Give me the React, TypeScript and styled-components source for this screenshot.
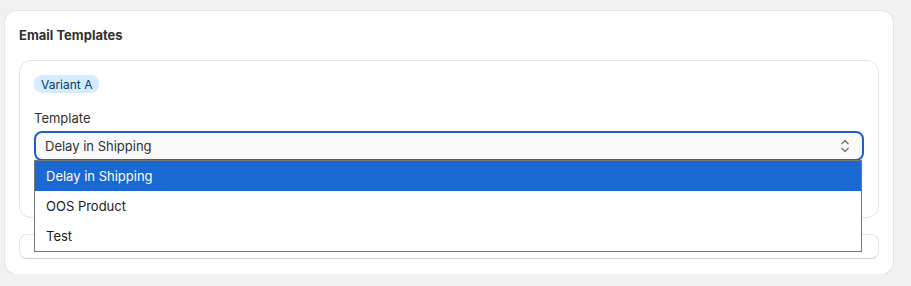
import React from "react";
import styled, { createGlobalStyle } from "styled-components";

const GlobalStyle = createGlobalStyle`
  html, body {
    margin: 0;
    padding: 0;
    background: #f1f1f1;
    font-family: Inter, "Noto Sans", sans-serif;
    color: #303030;
  }
`;

const options = ["Delay in Shipping", "OOS Product", "Test"];

export default function App() {
  const selected = options[0];

  return (
    <>
      <GlobalStyle />
      <Page>
        <Card>
          <Title>Email Templates</Title>
          <Stack>
            <InnerCard>
              <Badge>Variant A</Badge>
              <Field>
                <Label>Template</Label>
                <SelectWrap>
                  <SelectBox>
                    <SelectText>{selected}</SelectText>
                    <Chevrons viewBox="0 0 20 20" aria-hidden>
                      <path d="M6.8 7.8 10 4.6l3.2 3.2" />
                      <path d="M6.8 12.2l3.2 3.2 3.2-3.2" />
                    </Chevrons>
                  </SelectBox>
                  <Dropdown>
                    {options.map((o) => (
                      <Option key={o} $active={o === selected}>
                        {o}
                      </Option>
                    ))}
                  </Dropdown>
                </SelectWrap>
              </Field>
            </InnerCard>
            <CollapsedCard />
          </Stack>
        </Card>
      </Page>
    </>
  );
}

const Page = styled.div`
  padding: 11px 0 0 5px;
`;

const Card = styled.div`
  width: 888px;
  box-sizing: border-box;
  background: #fff;
  border-radius: 12px;
  padding: 14px 14px 15px 14px;
  box-shadow: 0 1px 0 0 #dcdcdc, 0 0 0 1px rgba(0, 0, 0, 0.05);
`;

const Title = styled.h2`
  margin: 0;
  font-size: 13px;
  line-height: 20px;
  font-weight: 650;
  color: #303030;
`;

const Stack = styled.div`
  display: flex;
  flex-direction: column;
  gap: 16px;
  margin-top: 15px;
`;

const InnerCard = styled.div`
  box-sizing: border-box;
  display: flex;
  flex-direction: column;
  align-items: flex-start;
  border: 1px solid #e3e3e3;
  border-radius: 12px;
  padding: 14px 14px 0;
  height: 158px;
  width: 860px;
`;

const Badge = styled.span`
  display: inline-flex;
  align-items: center;
  height: 18px;
  background: #d5ebff;
  color: #00416a;
  font-size: 12px;
  padding: 0 7px;
  border-radius: 8px;
  font-weight: 400;
`;

const Field = styled.div`
  margin-top: 17px;
  align-self: stretch;
`;

const Label = styled.div`
  font-size: 13px;
  line-height: 16px;
  color: #303030;
`;

const SelectWrap = styled.div`
  position: relative;
  margin-top: 5px;
`;

const SelectBox = styled.div`
  box-sizing: border-box;
  height: 30px;
  width: 830px;
  border: 2px solid #1c5fcf;
  border-radius: 8px;
  background: #fafafa;
  display: flex;
  align-items: center;
  justify-content: space-between;
  padding: 0 7px 0 9px;
`;

const SelectText = styled.span`
  font-size: 13px;
  color: #303030;
`;

const Chevrons = styled.svg`
  width: 20px;
  height: 20px;
  fill: none;
  stroke: #777;
  stroke-width: 1.4;
  stroke-linecap: round;
  stroke-linejoin: round;
`;

const Dropdown = styled.div`
  position: absolute;
  top: 29px;
  left: 0;
  width: 828px;
  box-sizing: border-box;
  background: #fff;
  border: 1px solid #767676;
  z-index: 2;
`;

const Option = styled.div<{ $active: boolean }>`
  height: 30px;
  line-height: 30px;
  padding-left: 11px;
  font-size: 13px;
  color: ${(p) => (p.$active ? "#fff" : "#1a1a1a")};
  background: ${(p) => (p.$active ? "#1a68d1" : "#fff")};
`;

const CollapsedCard = styled.div`
  box-sizing: border-box;
  width: 860px;
  height: 25px;
  border: 1px solid #e3e3e3;
  border-bottom-color: #cfcfcf;
  border-radius: 8px;
`;
